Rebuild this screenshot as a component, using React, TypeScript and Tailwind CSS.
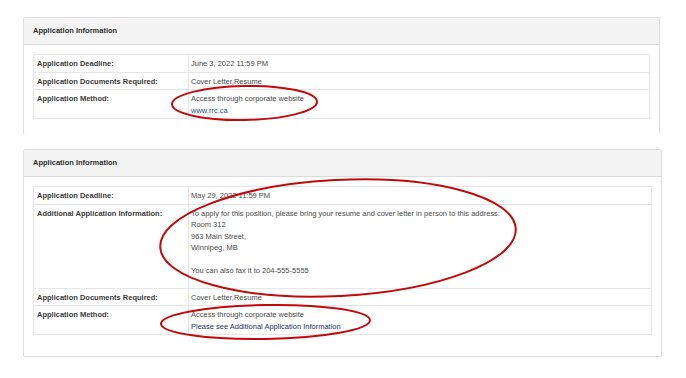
import React from "react";

type Row = { label: string; lines: React.ReactNode[]; extraLine?: boolean };

const panelOne: Row[] = [
  { label: "Application Deadline:", lines: ["June 3, 2022 11:59 PM"] },
  { label: "Application Documents Required:", lines: ["Cover Letter,Resume"] },
  {
    label: "Application Method:",
    lines: [
      "Access through corporate website",
      <span className="text-[#23508a]">www.rrc.ca</span>,
    ],
  },
];

const panelTwo: Row[] = [
  { label: "Application Deadline:", lines: ["May 29, 2022 11:59 PM"] },
  {
    label: "Additional Application Information:",
    lines: [
      "To apply for this position, please bring your resume and cover letter in person to this address:",
      "Room 312",
      "963 Main Street,",
      "Winnipeg, MB",
      "\u00a0",
      "You can also fax it to 204-555-5555",
    ],
    extraLine: true,
  },
  { label: "Application Documents Required:", lines: ["Cover Letter,Resume"] },
  {
    label: "Application Method:",
    lines: [
      "Access through corporate website",
      <span className="text-[#1c2f6e]">Please see Additional Application Information</span>,
    ],
  },
];

function InfoTable({ rows }: { rows: Row[] }) {
  return (
    <div className="border border-[#e6e6e6]">
      {rows.map((row, i) => (
        <div
          key={i}
          className={`flex ${i > 0 ? "border-t border-[#e6e6e6]" : ""}`}
        >
          <div className="w-[155px] shrink-0 px-[3px] pt-[3px] pb-[2px] font-bold text-[#3a3a3a] border-r border-[#e6e6e6]">
            {row.label}
          </div>
          <div className="flex-1 px-[2px] pt-[3px] pb-[2px] text-[#4a4a4a]">
            {row.lines.map((line, j) => (
              <div key={j}>{line}</div>
            ))}
            {row.extraLine && <div className="h-[9px]" />}
          </div>
        </div>
      ))}
    </div>
  );
}

function Panel({ rows, cut }: { rows: Row[]; cut?: boolean }) {
  return (
    <div
      className={`border border-[#dedede] rounded-[2px] ${cut ? "border-b-0" : ""}`}
    >
      <div className="h-[27px] flex items-center px-[9px] bg-[#f4f4f4] border-b border-[#dcdcdc] font-bold text-[#2e2e2e]">
        Application Information
      </div>
      <div className={`px-[9px] pt-[9px] ${cut ? "pb-[16px]" : "pb-[21px]"}`}>
        <InfoTable rows={rows} />
      </div>
    </div>
  );
}

export default function App() {
  return (
    <div
      className="relative w-[686px] h-[378px] bg-white overflow-hidden text-[7.5px] leading-[11.5px]"
      style={{ fontFamily: '"Liberation Sans", Arial, sans-serif' }}
    >
      <div className="pt-[17px] pl-[23px] pr-[26px]">
        <Panel rows={panelOne} cut />
      </div>
      <div className="pt-[14px] pl-[23px] pr-[24px]">
        <Panel rows={panelTwo} />
      </div>

      <svg
        className="absolute inset-0 pointer-events-none"
        width="686"
        height="378"
        viewBox="0 0 686 378"
      >
        <g fill="none" stroke="#c20a0a" strokeWidth="2">
          <ellipse cx="244.5" cy="103" rx="72.5" ry="17" transform="rotate(-1 244.5 103)" />
          <ellipse cx="338" cy="238" rx="178" ry="58" transform="rotate(-3 338 238)" />
          <ellipse cx="265.5" cy="322" rx="104.5" ry="17" transform="rotate(-1 265.5 322)" />
        </g>
      </svg>
    </div>
  );
}
